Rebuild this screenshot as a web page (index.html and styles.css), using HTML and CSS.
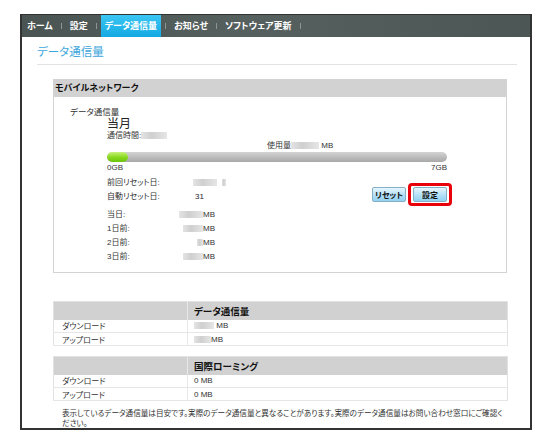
FILE: index.html
```html
<!DOCTYPE html>
<html lang="ja">
<head>
<meta charset="utf-8">
<title>データ通信量</title>
<link rel="stylesheet" href="styles.css">
</head>
<body>
<div class="frame">
  <nav class="nav">
    <span class="tab">ホーム</span><span class="sep"></span>
    <span class="tab">設定</span><span class="sep"></span>
    <span class="tab active">データ通信量</span><span class="sep"></span>
    <span class="tab">お知らせ</span><span class="sep"></span>
    <span class="tab">ソフトウェア更新</span><span class="sep"></span>
  </nav>
  <main class="content">
    <h1 class="title">データ通信量</h1>
    <section class="panel">
      <div class="panel-head">モバイルネットワーク</div>
      <div class="panel-body">
        <div class="label-sm">データ通信量</div>
        <div class="month">
          <div class="month-title">当月</div>
          <div class="line">通信時間:<span class="blur w26"></span></div>
          <div class="usage">使用量<span class="blur w28"></span> MB</div>
          <div class="bar"><div class="fill" style="width:21px"></div></div>
          <div class="scale"><span>0GB</span><span>7GB</span></div>
          <div class="resets">
            <div class="info">
              <span>前回リセット日:</span><span><span class="blur w24"></span><span class="blur w4 gap"></span></span>
              <span>自動リセット日:</span><span class="num">31</span>
            </div>
            <div class="buttons">
              <button class="btn">リセット</button>
              <span class="highlight"><button class="btn">設定</button></span>
            </div>
          </div>
          <div class="daily">
            <span>当日:</span><span class="val"><span class="blur w24"></span>MB</span>
            <span>1日前:</span><span class="val"><span class="blur w20"></span>MB</span>
            <span>2日前:</span><span class="val"><span class="blur w6"></span>MB</span>
            <span>3日前:</span><span class="val"><span class="blur w20"></span>MB</span>
          </div>
        </div>
      </div>
    </section>

    <table class="stats">
      <thead><tr><th></th><th>データ通信量</th></tr></thead>
      <tbody>
        <tr><td>ダウンロード</td><td><span class="blur w20"></span> MB</td></tr>
        <tr><td>アップロード</td><td><span class="blur w17"></span>MB</td></tr>
      </tbody>
    </table>

    <table class="stats second">
      <thead><tr><th></th><th>国際ローミング</th></tr></thead>
      <tbody>
        <tr><td>ダウンロード</td><td>0 MB</td></tr>
        <tr><td>アップロード</td><td>0 MB</td></tr>
      </tbody>
    </table>

    <p class="note">表示しているデータ通信量は目安です。実際のデータ通信量と異なることがあります。実際のデータ通信量はお問い合わせ窓口にご確認く<br>ださい。</p>
  </main>
</div>
</body>
</html>
```
FILE: styles.css
```css
* { box-sizing: border-box; }
body {
  margin: 0;
  background: #fff;
  font-family: "Liberation Sans", "Noto Sans CJK JP", sans-serif;
  color: #222;
  font-feature-settings: "palt";
}
.frame {
  margin: 14px 0 0 20px;
  width: 512px;
  height: 416px;
  border: 2px solid #333;
  border-top-width: 1px;
  border-bottom-width: 2px;
}
.nav {
  height: 22px;
  display: flex;
  align-items: center;
  padding-left: 1px;
  background: linear-gradient(90deg, #4a5452 0%, #56605f 45%, #4c5755 100%);
}
.tab {
  height: 22px;
  line-height: 22px;
  padding: 0 4px;
  color: #fff;
  font-size: 9px;
  font-weight: bold;
  white-space: nowrap;
}
.tab.active {
  background: linear-gradient(#3cc6f4, #12a9e2);
}
.sep {
  width: 1px;
  height: 6px;
  margin: 0 4px;
  background: #8d9594;
}
.content {
  padding: 0 13px 0 15px;
}
.title {
  margin: 8px 0 0;
  padding-bottom: 5px;
  font-size: 11.5px;
  line-height: 14px;
  font-weight: normal;
  color: #3ea6dc;
  border-bottom: 1px solid #e3e3e3;
}
.panel {
  margin: 14px 0 0 16px;
  width: 454px;
  border: 1px solid #d3d3d3;
}
.panel-head {
  height: 17px;
  line-height: 17px;
  padding-left: 1px;
  background: #d2d2d2;
  font-size: 9px;
  font-weight: bold;
  color: #111;
}
.panel-body {
  padding: 10px 0 8px 16px;
  font-size: 8px;
  color: #333;
}
.label-sm {
  line-height: 11px;
  font-size: 8.5px;
}
.month {
  margin-left: 37px;
  width: 340px;
}
.month-title {
  font-size: 12px;
  line-height: 12px;
  color: #222;
}
.line {
  line-height: 11px;
}
.usage {
  line-height: 10px;
  padding-left: 160px;
}
.blur {
  display: inline-block;
  height: 7px;
  vertical-align: -1px;
  background: linear-gradient(90deg, #e4e4e4, #cfcfcf 40%, #dadada 70%, #e6e6e6);
}
.blur.gap { margin-left: 5px; }
.w4 { width: 4px; }
.w6 { width: 6px; }
.w17 { width: 17px; }
.w20 { width: 20px; }
.w24 { width: 24px; }
.w26 { width: 26px; }
.w28 { width: 28px; }
.bar {
  margin-top: 1px;
  height: 10px;
  border-radius: 5px;
  background: linear-gradient(#d4d4d4, #bdbdbd 50%, #a9a9a9);
  overflow: hidden;
}
.fill {
  height: 100%;
  border-radius: 5px;
  background: linear-gradient(#c8f27a, #86d81e 55%, #6cc40c);
}
.scale {
  display: flex;
  justify-content: space-between;
  line-height: 12px;
}
.resets {
  margin-top: 2px;
  display: flex;
  justify-content: space-between;
  align-items: flex-end;
}
.info {
  display: grid;
  grid-template-columns: 86px auto;
  line-height: 14px;
}
.num { padding-left: 2px; color: #223; }
.buttons {
  display: flex;
  gap: 7px;
  margin-bottom: 2px;
}
.btn {
  height: 15px;
  padding: 0;
  border: 1px solid #86aec4;
  border-radius: 2px;
  background: linear-gradient(#e6f6fe, #b7e2f8 50%, #92d1f2);
  font-family: "Noto Sans CJK JP", sans-serif;
  font-feature-settings: "palt";
  font-size: 8px;
  font-weight: bold;
  color: #111;
  width: 34px;
  line-height: 13px;
}
.highlight {
  position: relative;
  display: inline-block;
}
.highlight::after {
  content: "";
  position: absolute;
  left: -5px;
  top: -4px;
  right: -5px;
  bottom: -4px;
  border: 3px solid #e8000b;
  border-radius: 4px;
}
.daily {
  margin-top: 4px;
  display: grid;
  grid-template-columns: 70px 38px;
  line-height: 14px;
}
.val { text-align: right; }
.stats {
  margin: 28px 0 0 16px;
  width: 455px;
  border-collapse: collapse;
  border: 1px solid #e2e2e2;
  font-size: 8px;
  color: #333;
}
.stats.second { margin-top: 10px; }
.stats th {
  height: 18px;
  padding: 0 0 0 6px;
  background: #d1d1d1;
  text-align: left;
  font-size: 9.5px;
  font-weight: bold;
  color: #111;
}
.stats th:first-child {
  width: 134px;
  border-right: 1px solid #e8e8e8;
}
.stats td {
  height: 13px;
  padding: 0 0 0 6px;
  border-bottom: 1px solid #e6e6e6;
}
.stats td:first-child {
  padding-left: 8px;
  border-right: 1px solid #e8e8e8;
}
.note {
  margin: 8px 0 0 25px;
  width: 460px;
  font-size: 7.6px;
  line-height: 10px;
  color: #333;
}
```
